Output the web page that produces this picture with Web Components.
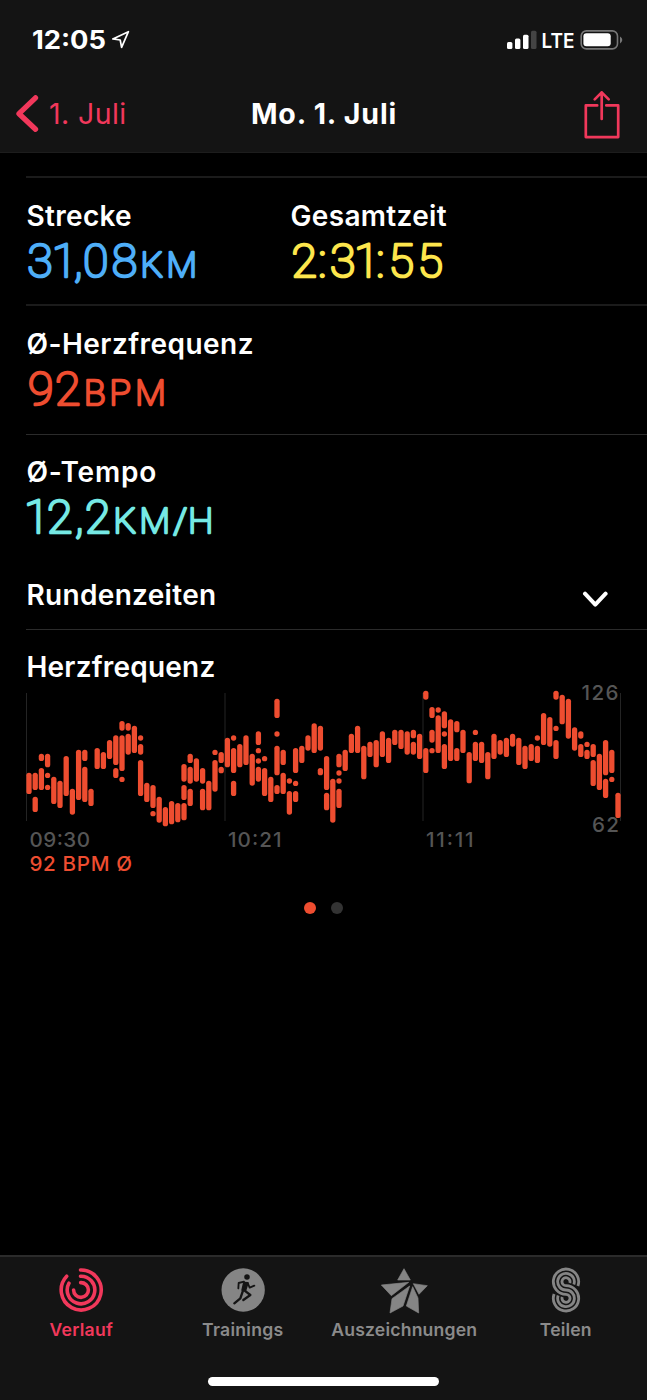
<!DOCTYPE html>
<html lang="de">
<head>
<meta charset="utf-8">
<title>Mo. 1. Juli</title>
<style>
html,body{margin:0;background:#000}
body{width:647px;height:1400px;overflow:hidden;font-family:Inter,"Liberation Sans",sans-serif;color:#fff}
</style>
</head>
<body>
<workout-page></workout-page>
<script>
const define = (name, html, setup) => customElements.define(name, class extends HTMLElement {
  connectedCallback() {
    if (this.shadowRoot) return;
    const root = this.attachShadow({ mode: 'open' });
    root.innerHTML = html;
    if (setup) setup(this, root);
  }
});

/* Label tracked out to a fixed advance width */
define('fit-text', `<style>:host{display:block;white-space:nowrap}span{display:inline-block}</style><span></span>`, (el, root) => {
  const s = root.querySelector('span');
  s.textContent = el.getAttribute('text');
  const gap = (parseFloat(el.getAttribute('w')) - s.getBoundingClientRect().width) / s.textContent.length;
  s.style.letterSpacing = gap.toFixed(3) + 'px';
});

define('status-bar', `<style>:host{display:block;height:76px}svg{display:block}text{font-family:Inter,sans-serif;font-weight:700;fill:#fff}</style>
<svg width="647" height="76">
<text x="32" y="49" font-size="25" textLength="74" lengthAdjust="spacingAndGlyphs">12:05</text>
<path d="M112.8 38.9 128.4 31.7 121.6 47.3 120.2 40Z" fill="none" stroke="#fff" stroke-width="1.7" stroke-linejoin="round"/>
<g fill="#fff"><rect x="507" y="42" width="5.4" height="7" rx="1.5"/><rect x="515" y="38.4" width="5.4" height="10.6" rx="1.5"/><rect x="523" y="34.7" width="5.5" height="14.3" rx="1.5"/><rect x="531" y="30.7" width="5.5" height="18.3" rx="1.5" fill="#444"/></g>
<text x="541.6" y="48" font-size="20.2" style="font-weight:600" textLength="33" lengthAdjust="spacingAndGlyphs">LTE</text>
<rect x="581.2" y="30.9" width="36.3" height="18" rx="5.2" fill="none" stroke="#777" stroke-width="1.6"/>
<rect x="583.4" y="33.3" width="27.3" height="13" rx="3" fill="#fff"/>
<path d="M620 36.6Q622.3 38 622.3 40T620 43.4Z" fill="#777"/>
</svg>`);

define('nav-bar', `<style>:host{display:grid;grid-template-columns:210px 1fr 210px;height:76px;border-bottom:1px solid #1d1d1d;box-sizing:border-box}
:host>*{min-width:0}.back{display:flex;color:#f1385b;padding-left:16px;gap:10px}.back svg{margin-top:19px}
fit-text{line-height:34px;margin-top:21px}.title{font-weight:700;font-size:28.5px;margin-left:41px}.b{font-size:28.5px}
.share{display:flex;justify-content:flex-end;padding:14px 26px 0 0}svg{display:block;fill:none;stroke:#f1385b}</style>
<div class="back"><svg width="23" height="38"><path d="M19.5 2.8 3 18.7l16.5 15.6" stroke-width="5.3" stroke-linecap="round" stroke-linejoin="round"/></svg><fit-text class="b" text="1. Juli" w="77.5"></fit-text></div>
<fit-text class="title" text="Mo. 1. Juli" w="146"></fit-text>
<div class="share"><svg width="37" height="50" stroke-width="2.7"><path d="M13.2 15.4H1.8V47.1H34.2V15.4H22.3" stroke-linejoin="round" stroke-linecap="round"/><path d="M17.7 29V2.4M10.7 9.4l7-7 7 7" stroke-linecap="round" stroke-linejoin="round"/></svg></div>`);

/* A caption with its figure and unit, set in thin strokes with round joins */
define('metric-value', `<style>:host{display:block;width:264px}fit-text{font-size:28px;font-weight:600;line-height:34px;padding-left:.5px}
svg{display:block;overflow:visible;fill:currentColor;stroke:currentColor;stroke-width:2.7px;stroke-linejoin:round}text{font-family:Roboto,sans-serif;font-weight:100}</style>
<fit-text></fit-text><svg width="264" height="60"></svg>`, (el, root) => {
  const a = n => el.getAttribute(n);
  const l = root.querySelector('fit-text');
  const n = document.createElement('fit-text');
  n.setAttribute('text', a('label')); n.setAttribute('w', a('w')); l.replaceWith(n);
  const svg = root.querySelector('svg'); svg.style.color = a('color');
  svg.innerHTML = `<text x="${a('x')}" y="43.5" font-size="46.5">${a('value')}</text>` +
    (a('unit') ? `<text x="${a('ux')}" y="43.5" font-size="35.5">${a('unit')}</text>` : '');
});

define('metric-row', `<style>:host{display:flex;box-sizing:border-box;padding-top:21px;border-top:2px solid #1b1b1b}:host([thin]){padding-top:20px;border-top:1px solid #2b2b2b}</style><slot></slot>`);

define('lap-row', `<style>:host{display:flex;justify-content:space-between;height:80px;box-sizing:border-box;padding:29px 39px 0 .5px}fit-text{font-size:28px;font-weight:600;line-height:34px}svg{margin-top:13px}</style>
<fit-text text="Rundenzeiten" w="190"></fit-text><svg width="26" height="18"><path d="M3 2.7 13.3 13.6 23.6 2.7" fill="none" stroke="#fff" stroke-width="4" stroke-linecap="round" stroke-linejoin="round"/></svg>`);

/* Heart rate ranges: one entry per column, "top-bottom" for a bar, one number for a dot */
const RANGES = `278-342|278-330,350-396|221-243,264-330|221-262,286,322|290-372|302-384|228-348|326-404|209-360|209-243,260-366|326-378|204-267|216-267|180-237|166-255,264-294|123-152,166-273,298|129-152,161-224|137-219|174,192-224,240-348|308-366|315-384,401|350-428|381-439|363-433|369-427|252-305,315-360,369-421|221-249,260-311,326-378|235-305|264-311,326-391|302-391|217,240-335|216-249,260-280|173-262|174,204-279,302-348|192-262|166-255|221-317|154-195,212,243,260-305|236,264-348|290-366|56-114,162,197-286,315-342|209-255,278-342|303,333-404|204-279,310,333-366|197-249|166-212|130-219|137-212,264-286|228-330,338-391|296-428|221-262,279,303,326-384|209-273|161-219|137-219|197-298|185-231|180-262|154-231|173-249|149-195|149-207|154-224|149-175,185-224|161-237|32-59,204-279|81-114,149-188,212|90,106-219|94-145,162,192-267|118-243|123-157,204-243|149-219|216-310|157,185-243|185-249|216-298|161-237|180-224|173-231|161-200|173-255|197-267|192-243|174,197-249|99-195|111-200|32-59,145,180-237|44-133|56-176|142-212|154-176,192-231|193,209-237|192-231,240-318|221-330|180-286,296-354|209-279,298|338-414`;

define('heart-chart', `<style>:host{display:block;border-top:1px solid #2b2b2b;padding-top:20px}fit-text{font-size:28px;font-weight:600;line-height:34px;padding-left:.5px}
svg{display:block;overflow:visible}text{font-family:Inter,sans-serif;font-size:20.6px;font-weight:500;fill:#555}.avg{fill:#ee4d30}.bars{fill:#ee4d30}</style>
<fit-text text="Herzfrequenz" w="189"></fit-text>
<svg width="621" height="200" viewBox="26 684 621 200">
<path d="M26.5 693V821M225 693V821M423 693V821M620.5 693V821" stroke="#242424" fill="none"/>
<text x="581.5" y="700" textLength="37">126</text><text x="592" y="832" textLength="27">62</text>
<g class="bars"></g>
<text x="29.5" y="847" textLength="60.5">09:30</text><text x="228" y="847" textLength="53.5">10:21</text><text x="426" y="847" textLength="47.5">11:11</text>
<text class="avg" x="29.5" y="871" textLength="102.5">92 BPM Ø</text>
</svg>`, (el, root) => {
  root.querySelector('.bars').innerHTML = RANGES.split('|').map((col, i) => col.split(',').map(p => {
    let [a, b] = p.split('-').map(Number);
    if (b === undefined) { b = a + 8; a -= 8; }
    return `<rect x="${(26.35 + i * 6.2).toFixed(2)}" y="${(680 + a / 3).toFixed(2)}" width="5.3" height="${((b - a) / 3).toFixed(2)}" rx="2.6"/>`;
  }).join('')).join('');
});

define('page-dots', `<style>:host{display:flex;justify-content:center;gap:15px;margin-top:18px}i{width:12px;height:12px;border-radius:50%;background:#ee4d30}i+i{background:#333}</style><i></i><i></i>`);

define('tab-item', `<style>:host{display:flex;flex-direction:column;align-items:center;color:#8b8b8b;flex:none}:host([active]){color:#f1385b}
fit-text{font-size:17.6px;font-weight:600;line-height:22px;margin-top:5px}::slotted(svg){display:block}</style><slot></slot><fit-text></fit-text>`, (el, root) => {
  const n = document.createElement('fit-text');
  n.setAttribute('text', el.getAttribute('label')); n.setAttribute('w', el.getAttribute('w'));
  root.querySelector('fit-text').replaceWith(n);
});

define('tab-bar', `<style>:host{display:flex;flex-direction:column;height:145px;box-sizing:border-box;background:#141414;border-top:2px solid #2b2b2b}
nav{display:grid;grid-template-columns:repeat(4,161.5px);padding:8.5px 0 0 .5px;flex:1}.home{width:231px;height:9px;border-radius:5px;background:#fff;margin:0 auto 14px}</style>
<nav>
<tab-item active label="Verlauf" w="63.5"><svg width="48" height="48" fill="none" stroke="#f1385b" stroke-width="3.6" stroke-linecap="round"><path d="M23.5 4A20 20 0 1 1 9.7 10.2M23.5 10.2A13.8 13.8 0 1 1 12 17.2M23.7 16.6A7.4 7.4 0 1 1 16.6 24"/></svg></tab-item>
<tab-item label="Trainings" w="81.5"><svg width="48" height="48" viewBox="656 76 144 144"><circle cx="728.5" cy="148" r="65" fill="#858585"/><circle cx="740" cy="109" r="8.3" fill="#141414"/><g fill="none" stroke="#141414" stroke-linecap="round" stroke-linejoin="round"><path d="M731 123 715 127 714 143M742 127 748 141 762 135" stroke-width="5.5"/><path d="M731 126 742 127 735 149 726 148Z" fill="#141414" stroke-width="6"/><path d="M733 150 750 163 729 178M728 150 720 173 702 188" stroke-width="7"/></g></svg></tab-item>
<tab-item label="Auszeichnungen" w="146"><svg width="48" height="48" viewBox="171 76 144 144" fill="#858585" stroke="#858585" stroke-width="2" stroke-linejoin="round"><path d="M243 84 262 118H224ZM175 133 257 125 205 165ZM271 129 313 135 288 161ZM260 136 207 174 201 217 240 196ZM269 138 285 172 287 217 250 196Z"/></svg></tab-item>
<tab-item label="Teilen" w="52"><svg width="48" height="48" viewBox="657 76 144 144" fill="none" stroke="#858585" stroke-width="8.5" stroke-linecap="butt"><path d="M764.7 136A38 38 0 1 0 729 161A12 12 0 1 1 717.7 169M752.5 131.5A25 25 0 1 0 729 148A25 25 0 1 1 705.5 164.5M740.3 127A12 12 0 1 0 729 135A38 38 0 1 1 693.3 160"/></svg></tab-item>
</nav><div class="home"></div>`);

define('workout-page', `<style>:host{display:flex;flex-direction:column;width:647px;height:1400px;background:#000}header{background:#141414;height:153px;flex:none}nav-bar{height:77px}
main{flex:1;padding:23px 0 0 26px}.r1{height:128px}.r2{height:130px}.r3{height:115px}page-dots{margin-right:26px}</style>
<header><status-bar></status-bar><nav-bar></nav-bar></header>
<main>
<metric-row class="r1"><metric-value label="Strecke" w="105.5" value="31,08" x="1.3 25.7 48 57.1 85.8" unit="KM" ux="114.6 140.6" color="#4eaef8"></metric-value><metric-value label="Gesamtzeit" w="156.5" value="2:31:55" x="1.5 28.2 40 64 86.2 98.6 127.6" color="#fde64c"></metric-value></metric-row>
<metric-row class="r2"><metric-value label="Ø-Herzfrequenz" w="227.5" value="92" x="2 29.1" unit="BPM" ux="58 83.6 109.3" color="#ee4d30"></metric-value></metric-row>
<metric-row class="r3" thin><metric-value label="Ø-Tempo" w="130.5" value="12,2" x="-2 21.1 49 59.1" unit="KM/H" ux="87.6 113.6 147.5 162.3" color="#75e9e4"></metric-value></metric-row>
<lap-row></lap-row><heart-chart></heart-chart><page-dots></page-dots>
</main>
<tab-bar></tab-bar>`);
</script>
</body>
</html>
